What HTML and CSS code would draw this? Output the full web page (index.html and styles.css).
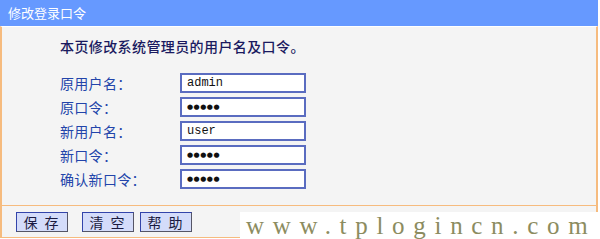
FILE: index.html
```html
<!DOCTYPE html>
<html lang="zh">
<head>
<meta charset="utf-8">
<link rel="stylesheet" href="styles.css">
</head>
<body>
<div class="page">
  <div class="title">修改登录口令</div>
  <div class="panel">
    <p class="intro">本页修改系统管理员的用户名及口令。</p>
    <div class="form">
      <div class="row"><span class="label">原用户名：</span><span class="input">admin</span></div>
      <div class="row"><span class="label">原口令：</span><span class="input dots">●●●●●</span></div>
      <div class="row"><span class="label">新用户名：</span><span class="input">user</span></div>
      <div class="row"><span class="label">新口令：</span><span class="input dots">●●●●●</span></div>
      <div class="row"><span class="label">确认新口令：</span><span class="input dots">●●●●●</span></div>
    </div>
  </div>
  <div class="footer">
    <button class="btn">保 存</button>
    <button class="btn gap">清 空</button>
    <button class="btn">帮 助</button>
  </div>
  <div class="watermark">www.tplogincn.com</div>
</div>
</body>
</html>
```
FILE: styles.css
```css
* { box-sizing: border-box; }
html, body { margin: 0; padding: 0; background: #ffffff; }
body { width: 600px; height: 239px; overflow: hidden; font-family: "Noto Sans CJK SC", "Liberation Sans", sans-serif; }
.page { position: relative; width: 598px; }
.title {
  height: 26px;
  background: #6699ff;
  color: #ffffff;
  font-size: 13px;
  line-height: 26px;
  padding-left: 8px;
}
.panel {
  background: #f4f4f4;
  border-left: 2px solid #f6bb7e;
  border-right: 2px solid #f6bb7e;
  border-top: 1px solid #ffffff;
  height: 179px;
  padding: 8px 0 0 58px;
}
.intro {
  margin: 0;
  font-size: 14px;
  line-height: 22px;
  color: #1a1a60;
  letter-spacing: 0.4px;
  font-weight: 500;
}
.form { margin-top: 16px; display: flex; flex-direction: column; gap: 4px; }
.row { display: flex; align-items: center; height: 20px; }
.label { width: 120px; font-size: 14px; color: #2244aa; letter-spacing: 0.3px; }
.input {
  width: 126px;
  height: 20px;
  border: 2px solid #5a6cc0;
  background: #ffffff;
  font-family: "Liberation Mono", monospace;
  font-size: 12px;
  line-height: 16px;
  padding-left: 5px;
  color: #111111;
}
.input.dots { font-size: 7px; letter-spacing: 0.5px; font-family: "DejaVu Sans", sans-serif; }
.footer {
  border-top: 1px solid #f6bb7e;
  border-left: 2px solid #f6bb7e;
  border-right: 2px solid #f6bb7e;
  border-bottom: 1px solid #f6bb7e;
  background: #f4f4f4;
  height: 33px;
  display: flex;
  align-items: center;
  padding-left: 14px;
  gap: 6px;
}
.btn {
  width: 52px;
  height: 20px;
  padding: 0;
  border: 1px solid #3344aa;
  border-right-color: #555566;
  border-bottom-color: #555566;
  background: #d4dcfa;
  color: #1a1a40;
  font-family: "Noto Sans CJK SC", sans-serif;
  font-size: 14px;
  line-height: 18px;
  letter-spacing: 2px;
}
.btn.gap { margin-left: 8px; }
.watermark {
  position: absolute;
  left: 240px;
  top: 212px;
  width: 360px;
  height: 27px;
  background: #ffffff;
  color: #8c8c60;
  font-family: "Liberation Serif", serif;
  font-size: 25px;
  line-height: 27px;
  letter-spacing: 8.7px;
  padding-left: 6px;
  white-space: nowrap;
}
```
